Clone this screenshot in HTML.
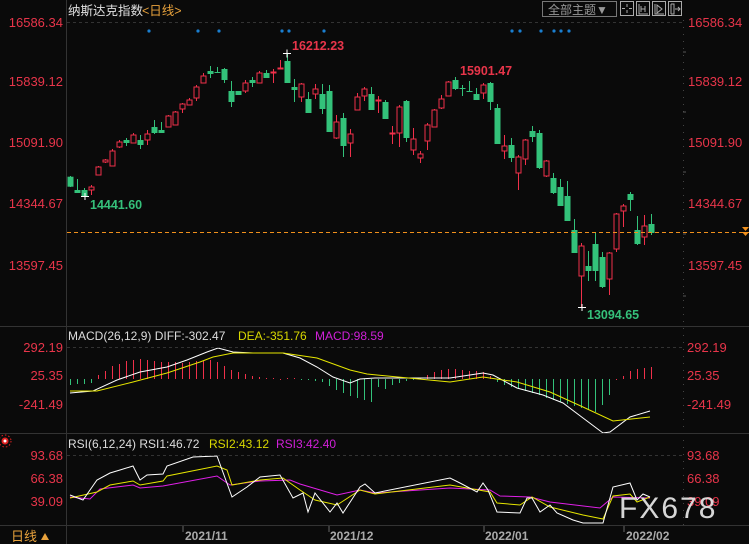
<!DOCTYPE html>
<html><head><meta charset="utf-8"><style>
html,body{margin:0;padding:0;background:#0a0a0a;width:749px;height:544px;overflow:hidden}
svg{display:block}
text{font-family:"Liberation Sans","Noto Sans CJK SC",sans-serif}
</style></head><body>
<svg id="s" width="749" height="544" xmlns="http://www.w3.org/2000/svg">
<rect width="749" height="544" fill="#0a0a0a"/>
<g id="g"></g>
<line x1="66.5" y1="0" x2="66.5" y2="544" stroke="#333"/>
<line x1="683.5" y1="20" x2="683.5" y2="525" stroke="#444" stroke-dasharray="1,6"/>
<line x1="0" y1="326.5" x2="749" y2="326.5" stroke="#333"/>
<line x1="0" y1="433.5" x2="749" y2="433.5" stroke="#333"/>
<line x1="0" y1="525.5" x2="749" y2="525.5" stroke="#333"/>
<line x1="67" y1="22.5" x2="683" y2="22.5" stroke="#333" stroke-dasharray="3,3"/>
<line x1="67" y1="347.5" x2="683" y2="347.5" stroke="#333" stroke-dasharray="3,3"/>
<line x1="67" y1="455.5" x2="683" y2="455.5" stroke="#333" stroke-dasharray="3,3"/>
<line x1="67" y1="232.5" x2="749" y2="232.5" stroke="#f0901c" stroke-dasharray="4,3"/>
<path d="M742 227 L749 227 L745.5 231 Z M742 232 L749 232 L745.5 236Z" fill="#f0901c"/>
<text x="68" y="15" font-size="12.5" fill="#e0e0e0">纳斯达克指数</text>
<text x="142" y="15" font-size="12.5" fill="#e8a23c">&lt;日线&gt;</text>
<rect x="542.5" y="1.5" width="74" height="15" fill="none" stroke="#777"/>
<text x="548" y="14" font-size="12" fill="#999">全部主题▼</text>
<g fill="none" stroke="#aaa">
<rect x="620.5" y="1.5" width="13" height="14"/><rect x="636.5" y="1.5" width="13" height="14"/>
<rect x="652.5" y="1.5" width="13" height="14"/><rect x="668.5" y="1.5" width="13" height="14"/>
<path d="M627 4v3M627 10v3M622 8.5h3M629 8.5h3"/>
<path d="M639 4v10h9M641 6v6M645 6v6M641 9h4"/>
<path d="M655 4v10h9M657 5l5 4-5 4z"/>
<path d="M671 4v10M671 4h3v10h-3M675 9h5M678 7l2 2-2 2"/>
</g>
<g font-size="13" fill="#e8354a">
<text x="63" y="27" text-anchor="end">16586.34</text>
<text x="63" y="86" text-anchor="end">15839.12</text>
<text x="63" y="147" text-anchor="end">15091.90</text>
<text x="63" y="208" text-anchor="end">14344.67</text>
<text x="63" y="270" text-anchor="end">13597.45</text>
<text x="688" y="27">16586.34</text>
<text x="688" y="86">15839.12</text>
<text x="688" y="147">15091.90</text>
<text x="688" y="208">14344.67</text>
<text x="688" y="270">13597.45</text>
<text x="63" y="352" text-anchor="end">292.19</text>
<text x="63" y="380" text-anchor="end">25.35</text>
<text x="63" y="409" text-anchor="end">-241.49</text>
<text x="687" y="352">292.19</text>
<text x="687" y="380">25.35</text>
<text x="687" y="409">-241.49</text>
<text x="63" y="460" text-anchor="end">93.68</text>
<text x="63" y="483" text-anchor="end">66.38</text>
<text x="63" y="506" text-anchor="end">39.09</text>
<text x="687" y="460">93.68</text>
<text x="687" y="483">66.38</text>
<text x="687" y="506">39.09</text>
</g>
<g stroke="#555"><path d="M683 52h3M683 112h3M683 172h3M683 234h3M683 296h3"/></g>
<g font-size="12.5" font-weight="bold">
<text x="292" y="50" fill="#e8354a">16212.23</text>
<text x="460" y="75" fill="#e8354a">15901.47</text>
<text x="90" y="209" fill="#35c07a">14441.60</text>
<text x="587" y="319" fill="#35c07a">13094.65</text>
</g>
<g stroke="#fff"><path d="M283 53.5h8M287 49.5v8M81 196.5h8M85 193v7M578 307.5h8M582 304v7"/></g>
<text x="68" y="340" font-size="12" fill="#ddd">MACD(26,12,9) DIFF:-302.47</text>
<text x="238" y="340" font-size="12" fill="#d8d800">DEA:-351.76</text>
<text x="315" y="340" font-size="12" fill="#d020d8">MACD:98.59</text>
<text x="68" y="448" font-size="12" fill="#ddd">RSI(6,12,24) RSI1:46.72</text>
<text x="209" y="448" font-size="12" fill="#d8d800">RSI2:43.12</text>
<text x="276" y="448" font-size="12" fill="#d020d8">RSI3:42.40</text>
<circle cx="5" cy="441" r="2.5" fill="#fff" stroke="#e02020" stroke-width="2"/>
<circle cx="5" cy="441" r="6" fill="none" stroke="#e02020" stroke-dasharray="1.5,2"/>
<text x="11" y="541" font-size="13" fill="#e8a23c">日线</text>
<path d="M41 540l4-7 4 7z" fill="#e8a23c"/>
<g font-size="12" font-weight="bold" fill="#aaa">
<text x="185" y="540">2021/11</text><text x="330" y="540">2021/12</text>
<text x="485" y="540">2022/01</text><text x="626" y="540">2022/02</text>
</g>
<g stroke="#666"><path d="M183 526v6M329 526v6M484 526v6M624 526v6"/></g>
<text x="619" y="518" font-size="30" fill="#e8e8e8" opacity="0.92" letter-spacing="2">FX678</text>
</svg>
<script>
var C=[[70,176.7,186.7,176,187,0],[77,190,193,179,193,0],[84,190,196,188,197,0],[91,187,190,185,195,1],[98,167,175,166,175,1],[105,160,162,159,163,1],[112,151,166,149,166,1],[119,142,147,140,148,1],[126,140,143,138,146,0],[133,135,143,133,143,1],[140,140,145,135,149,0],[147,134,140,130,145,1],[154,127,133,120,134,0],[161,130,133,122,133,0],[168,116,127,115,127,1],[175,112,125,111,125,1],[182,104,109,103,113,1],[189,100,105,98,105,1],[196,87,98,85,101,1],[203,76,83,73,83,1],[210,71,74,66,78,0],[217,72,73,67,73,0],[224,69,80,68,83,0],[231,91,102,81,107,0],[238,91,95,91,95,0],[245,83,91,80,93,1],[252,80,83,77,87,0],[259,73,83,71,83,1],[266,73,78,70,78,0],[273,72,73,69,83,1],[280,68,69,60,69,1],[287,61,83,53,83,0],[294,87,90,79,102,0],[301,84,97,83,102,1],[308,99,113,92,113,0],[315,89,94,84,99,1],[322,94,109,84,114,0],[329,91,132,85,132,0],[336,122,138,115,139,1],[343,118,146,113,157,0],[350,134,143,129,157,1],[357,97,110,93,110,1],[364,89,96,87,101,1],[371,94,110,87,110,0],[378,100,101,96,113,1],[385,102,119,100,119,0],[392,133,134,126,144,1],[399,107,133,105,147,1],[406,101,138,100,142,0],[413,139,150,128,155,1],[420,154,158,151,163,1],[427,125,141,123,150,1],[434,110,127,109,127,1],[441,99,108,95,109,1],[448,82,96,81,96,1],[455,80,89,77,90,0],[462,88,89,85,96,0],[469,91,92,81,92,0],[476,94,100,88,100,0],[483,85,93,83,99,1],[490,83,102,82,110,0],[497,108,144,104,144,0],[504,146,151,135,159,1],[511,145,158,138,162,0],[518,157,173,155,190,1],[525,140,159,139,165,1],[532,131,137,126,142,0],[539,133,168,130,169,0],[546,161,176,160,177,1],[553,178,193,173,194,0],[560,187,206,179,206,0],[567,196,221,181,221,0],[574,230,253,219,253,0],[581,246,276,243,307,1],[588,266,271,251,281,0],[595,244,271,233,281,0],[602,257,287,252,288,0],[609,253,279,252,295,1],[616,214,249,213,252,1],[623,206,211,204,227,1],[630,194,200,192,211,0],[637,230,244,216,245,0],[644,226,237,215,245,1],[651,224,233,214,235,0]];
var H=[385,384,384,383,375,371,366,364,361,360,359,360,361,362,362,362,363,362,361,361,360,362,366,370,372,374,376,377,378,378,379,378,378,380,380,381,382,386,390,393,396,398,400,402,387,389,385,383,381,380,378,375,372,370,369,369,370,371,371,372,376,382,385,387,389,391,393,395,398,400,402,404,406,408,410,412,405,395,379,376,371,369,368,367];
var R='#f0304a',G='#33c27a',o='';
for(var i=0;i<C.length;i++){var c=C[i],x=c[0],col=c[5]?R:G;
o+='<line x1="'+(x+.5)+'" y1="'+c[3]+'" x2="'+(x+.5)+'" y2="'+c[4]+'" stroke="'+col+'"/>';
var h=Math.max(c[2]-c[1],1);
if(c[5])o+='<rect x="'+(x-2)+'" y="'+c[1]+'" width="5" height="'+h+'" fill="#0a0a0a" stroke="'+col+'"/>';
else o+='<rect x="'+(x-2.5)+'" y="'+c[1]+'" width="6" height="'+h+'" fill="'+col+'"/>';}
for(i=0;i<H.length;i++){var x=70+7*i+.5;o+='<line x1="'+x+'" y1="379" x2="'+x+'" y2="'+(H[i]==379?380:H[i])+'" stroke="'+(H[i]<=379?R:G)+'"/>';}
var dots=[149,198,219,282,289,324,512,520,541,554,561,569];
dots.forEach(function(d){o+='<circle cx="'+d+'" cy="31" r="1.6" fill="#1a7fd0"/>';});
function pl(p,c){return '<polyline points="'+p+'" fill="none" stroke="'+c+'" stroke-width="1"/>';}
o+=pl('70,393 93,391 117,380 140,372 167,367 187,360 207,352 218,348 233,352 253,353 283,353 300,358 317,367 333,377 350,383 360,379 375,378 450,378 483,373 493,375 517,388 543,395 563,403 583,418 603,433 610,432 630,417 650,411','#fff');
o+=pl('70,391 97,391 133,382 167,373 200,362 213,357 233,353 283,353 317,358 350,370 367,374 450,382 483,377 517,382 550,392 583,407 613,421 650,417','#e6e600');
o+=pl('70,497 90,499 100,489 133,485 140,488 163,486 217,476 230,485 260,481 290,480 300,484 337,495 360,490 375,493 450,488 490,490 500,496 530,497 550,502 600,508 613,497 650,498','#e020e8');
o+=pl('70,498 97,492 110,485 133,481 140,485 163,481 167,476 217,466 227,470 232,485 260,480 283,478 300,490 315,500 337,505 360,490 375,494 450,485 490,492 497,503 520,505 532,497 550,507 583,515 603,519 613,496 630,494 637,502 650,497','#e6e600');
o+=pl('70,495 83,500 97,480 110,473 120,470 133,466 140,480 147,475 163,474 167,466 193,457 217,456 232,497 247,487 260,477 280,475 293,498 303,493 308,512 315,493 330,512 337,503 343,513 360,487 365,484 375,493 450,478 460,483 477,492 483,483 488,490 497,512 520,513 527,498 532,498 540,512 550,505 557,513 573,520 583,523 603,523 613,487 630,483 637,500 643,494 650,497','#fff');
document.getElementById('g').innerHTML=o;
</script>
</body></html>
